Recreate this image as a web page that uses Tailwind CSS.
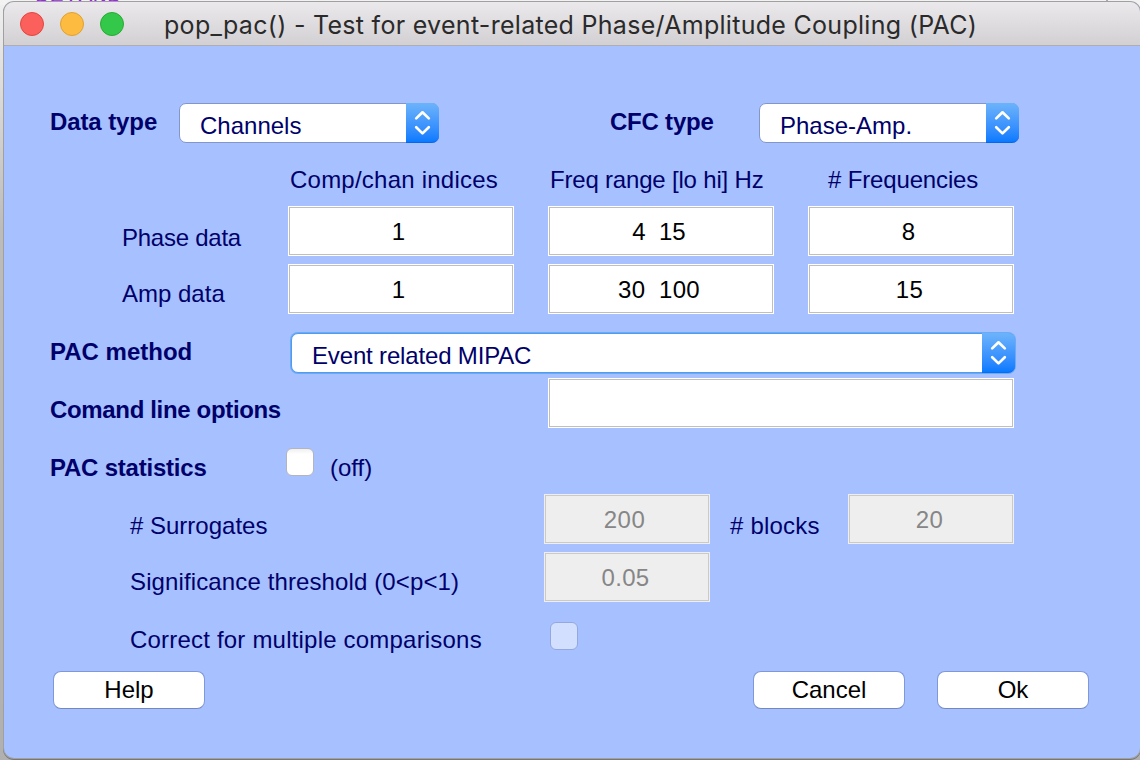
<!DOCTYPE html>
<html lang="en">
<head>
<meta charset="utf-8">
<title>pop_pac()</title>
<script src="https://cdn.jsdelivr.net/npm/@tailwindcss/browser@4"></script>
</head>
<body class="relative h-[760px] w-[1140px] overflow-hidden bg-linear-to-b from-[#f0f0f0] via-[#bcbcbc] via-30% to-[#b0b0b0] pl-[4px] pt-[2px] font-['Liberation_Sans',Arial,sans-serif] text-[24px] leading-[28px] text-[#00006a]">
<svg width="0" height="0" class="absolute"><defs>
<symbol id="updown" viewBox="0 0 33 40"><path d="M10.2 15.4 16.5 9.3 22.8 15.4M10.2 24.3 16.5 30.4 22.8 24.3" fill="none" stroke="#fff" stroke-width="2.7" stroke-linecap="round" stroke-linejoin="round"/></symbol>
</defs></svg>
<div class="absolute left-0 top-0 h-[5px] w-full overflow-hidden bg-[#f2f2f2]"><span class="absolute -top-[18px] left-[35px] whitespace-nowrap font-['Liberation_Mono',monospace] text-[24px] text-[#a020f0]">DETAND</span><i class="absolute left-[1106px] top-0 h-[2px] w-[2px] bg-[#aaa]"></i></div>
<main class="relative flex h-[756px] w-[1136px] flex-col overflow-hidden rounded-[10px] bg-[#a7c0ff] shadow-[0_0_0_1px_#a0a0a0,0_1px_0_1px_#777]">
  <header class="flex h-[44px] shrink-0 items-start border-b border-[#b0adb0] bg-linear-to-b from-[#ebe9eb] to-[#d2d0d2] pl-[16px] pt-[10px]">
    <div class="flex gap-[16px]">
      <i class="size-[24px] rounded-full border border-[#e2453f] bg-[#fc605c]"></i>
      <i class="size-[24px] rounded-full border border-[#dea034] bg-[#fdbc40]"></i>
      <i class="size-[24px] rounded-full border border-[#27aa35] bg-[#34c84a]"></i>
    </div>
    <h1 class="ml-[40px] -mt-[1px] whitespace-nowrap font-['Inter',sans-serif] text-[25px] leading-[28px] tracking-[0.29px] text-[#2b2a2b]">pop_pac() - Test for event-related Phase/Amplitude Coupling (PAC)</h1>
  </header>

  <section class="mt-[57px] flex h-[62px] shrink-0 items-start whitespace-nowrap pl-[46px]">
    <b class="mt-[5px] w-[129px] tracking-[-0.1px]">Data type</b>
    <div class="flex h-[40px] w-[260px] rounded-[7px] border border-[#8396c8] bg-white"><span class="ml-[20px] mt-[8px] grow">Channels</span><span class="-m-px w-[33px] rounded-r-[7px] border-b border-[#0a66e8] bg-linear-to-b from-[#6cb3fa] to-[#067aff]"><svg width="33" height="40"><use href="#updown"/></svg></span></div>
    <b class="ml-[171px] mt-[5px] w-[149px] tracking-[-0.22px]">CFC type</b>
    <div class="flex h-[40px] w-[260px] rounded-[7px] border border-[#8396c8] bg-white"><span class="ml-[20px] mt-[8px] grow">Phase-Amp.</span><span class="-m-px w-[33px] rounded-r-[7px] border-b border-[#0a66e8] bg-linear-to-b from-[#6cb3fa] to-[#067aff]"><svg width="33" height="40"><use href="#updown"/></svg></span></div>
  </section>
  <section class="flex h-[41px] shrink-0 items-start whitespace-nowrap pl-[286px]">
    <span class="mt-px w-[260px] tracking-[0.23px]">Comp/chan indices</span><span class="mt-px w-[278px] tracking-[-0.19px]">Freq range [lo hi] Hz</span><span class="mt-px tracking-[-0.15px]"># Frequencies</span>
  </section>
  <section class="flex h-[58px] shrink-0 items-start whitespace-nowrap pl-[118px]">
    <span class="mt-[18px] w-[166px] tracking-[-0.25px]">Phase data</span>
    <div class="flex h-[50px] text-center text-black">
      <div class="mr-[34px] w-[226px] border border-white bg-white"><div class="h-full border border-[#bfbfc2] pr-[5px] pt-[10px]">1</div></div>
      <div class="mr-[34px] w-[226px] border border-white bg-white"><div class="h-full whitespace-pre border border-[#bfbfc2] pr-[4px] pt-[10px]">4  15</div></div>
      <div class="w-[206px] border border-white bg-white"><div class="h-full border border-[#bfbfc2] pr-[5px] pt-[10px]">8</div></div>
    </div>
  </section>
  <section class="flex h-[69px] shrink-0 items-start whitespace-nowrap pl-[118px]">
    <span class="mt-[16px] w-[166px]">Amp data</span>
    <div class="flex h-[50px] text-center text-black">
      <div class="mr-[34px] w-[226px] border border-white bg-white"><div class="h-full border border-[#bfbfc2] pr-[5px] pt-[10px]">1</div></div>
      <div class="mr-[34px] w-[226px] border border-white bg-white"><div class="h-full whitespace-pre border border-[#bfbfc2] pr-[4px] pt-[10px] tracking-[0.25px]">30  100</div></div>
      <div class="w-[206px] border border-white bg-white"><div class="h-full border border-[#bfbfc2] pr-[3px] pt-[10px] tracking-[0.3px]">15</div></div>
    </div>
  </section>
  <section class="flex h-[45px] shrink-0 items-start whitespace-nowrap pl-[46px]">
    <b class="mt-[5px] w-[241px]">PAC method</b>
    <div class="flex h-[40px] w-[724px] rounded-[7px] border border-[#4f9bf0] bg-white shadow-[0_0_0_1px_#6aaaf7]"><span class="ml-[20px] mt-[8px] grow tracking-[-0.16px]">Event related MIPAC</span><span class="-m-px w-[33px] rounded-r-[7px] border-b border-[#0a6cf0] bg-linear-to-b from-[#6cb3fa] to-[#067aff]"><svg width="33" height="40"><use href="#updown"/></svg></span></div>
  </section>
  <section class="flex h-[70px] shrink-0 items-start whitespace-nowrap pl-[46px]">
    <b class="mt-[18px] w-[498px] tracking-[-0.34px]">Comand line options</b>
    <div class="h-[50px] w-[466px] border border-white bg-white"><div class="h-full border border-[#bfbfc2]"></div></div>
  </section>
  <section class="flex h-[46px] shrink-0 items-start whitespace-nowrap pl-[46px]">
    <b class="mt-[6px] w-[236px] tracking-[-0.22px]">PAC statistics</b>
    <i class="size-[28px] rounded-[6px] border border-[#b2b5c0] bg-linear-to-b from-[#f0f0f0] via-white via-20% to-white"></i>
    <span class="ml-[16px] mt-[6px]">(off)</span>
  </section>
  <section class="flex h-[58px] shrink-0 items-start whitespace-nowrap pl-[126px]">
    <span class="mt-[18px] w-[414px]"># Surrogates</span>
    <div class="h-[50px] w-[166px] border border-[#eee] bg-[#eee] text-center text-[#868686]"><div class="h-full border border-[#cacaca] pr-[5px] pt-[10px] tracking-[0.5px]">200</div></div>
    <span class="ml-[20px] mt-[18px] w-[118px] tracking-[0.2px]"># blocks</span>
    <div class="h-[50px] w-[166px] border border-[#eee] bg-[#eee] text-center text-[#868686]"><div class="h-full border border-[#cacaca] pr-[3px] pt-[10px] tracking-[0.4px]">20</div></div>
  </section>
  <section class="flex h-[70px] shrink-0 items-start whitespace-nowrap pl-[126px]">
    <span class="mt-[16px] w-[414px] tracking-[0.12px]">Significance threshold (0&lt;p&lt;1)</span>
    <div class="h-[50px] w-[166px] border border-[#eee] bg-[#eee] text-center text-[#868686]"><div class="h-full border border-[#cacaca] pr-[3px] pt-[10px] tracking-[0.3px]">0.05</div></div>
  </section>
  <section class="flex h-[49px] shrink-0 items-start whitespace-nowrap pl-[126px]">
    <span class="mt-[4px] w-[420px] tracking-[0.2px]">Correct for multiple comparisons</span>
    <i class="size-[28px] rounded-[6px] border border-[#93a8de] bg-[#d3dfff]"></i>
  </section>
  <footer class="flex text-center text-black">
    <div class="ml-[49px] h-[38px] w-[152px] rounded-[8px] border border-[#7f98d8] border-b-[#7488bd] bg-white pt-[4px]">Help</div>
    <div class="ml-[548px] h-[38px] w-[152px] rounded-[8px] border border-[#7f98d8] border-b-[#7488bd] bg-white pt-[4px]">Cancel</div>
    <div class="ml-[32px] h-[38px] w-[152px] rounded-[8px] border border-[#7f98d8] border-b-[#7488bd] bg-white pt-[4px]">Ok</div>
  </footer>
</main>
</body>
</html>
